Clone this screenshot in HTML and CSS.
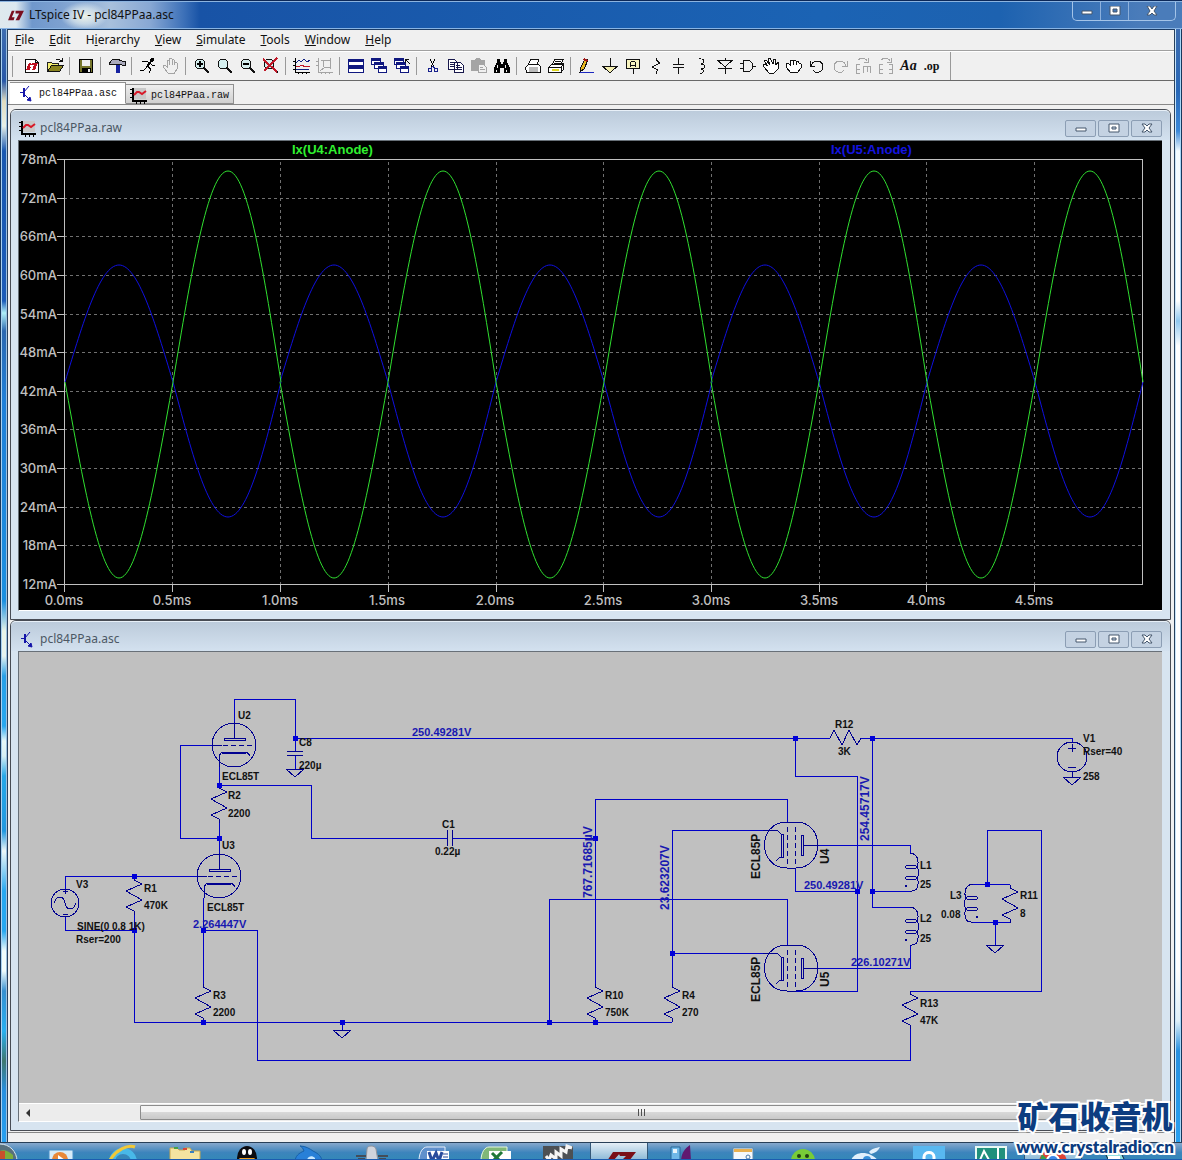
FILE: index.html
```html
<!DOCTYPE html>
<html lang="en">
<head>
<meta charset="utf-8">
<title>LTspice IV - pcl84PPaa.asc</title>
<link rel="stylesheet" href="styles.css">
</head>
<body>
<svg class="defs" aria-hidden="true">
  <defs>
    <g id="ic-raw"><path fill="#c8c8c8" d="M3 1h13v11H3z"/><path fill="none" stroke="#000" stroke-width="2" d="M3 1v13h14"/><path stroke="#000" d="M0 2.500h3M0 6.500h3M0 10.500h3M6.500 14v3M10.500 14v3M14.500 14v3"/><path fill="none" stroke="#d81828" stroke-width="2" d="M4 8l3-3h2l3 2 4-3"/></g>
    <g id="ic-asc" fill="none" stroke="#1414a8"><path stroke-width="2" d="M6 3v9"/><path d="M2 7.500h4M6 7l5-6M6 9l6 6"/><path fill="#1414a8" d="M13 16l-4-1 3-3z"/></g>
    <g id="ic-lt"><path fill="#7a0f20" d="M4 3h3L4 10h3l-1 3H0zM8 3h9l-5 10H8l4-7H8z"/></g>
    <g id="ic-lens"><circle cx="7" cy="7" r="5" fill="#d4eeee" stroke="#111"/><path stroke="#111" stroke-width="2" d="M11 11l5 5"/></g>
    <g id="ic-hand" fill="none" stroke="currentColor"><path d="M6 16l-4-5-1-2 2-1 2 2V4l1-1 1 1v4V2l2-1 1 1v6V3l1-1 1 1v5l1-3 2 1v6l-3 5z"/></g>
    <g id="ic-fist" fill="#fff" stroke="#111"><path d="M5 15l-3-4-1-2V7l2-1 2 2V4l2-1 1 1 2-1 1 1 2 0 1 2 2 1v4l-3 4z"/><path d="M8 4v4M11 4v4"/></g>
  </defs>
</svg>

<main class="app">
  <header class="titlebar">
    <svg class="logo" viewBox="0 0 17 15"><use href="#ic-lt"/></svg>
    <h1>LTspice IV - pcl84PPaa.asc</h1>
    <div class="caption">
      <button aria-label="Minimize"><svg viewBox="0 0 14 10"><path class="cap" d="M2 5h10v3H2z"/></svg></button>
      <button aria-label="Maximize"><svg viewBox="0 0 14 10"><path class="cap" fill-rule="evenodd" d="M2 0h10v9H2zM5 3v3h4V3z"/></svg></button>
      <button class="close" aria-label="Close"><svg viewBox="0 0 14 10"><path class="cap" d="M2 0h3l2 3 2-3h3L9 5l3 4H9L7 7 5 9H2l3-4z"/></svg></button>
    </div>
  </header>

  <div class="client">
    <nav class="menu">
      <button><u>F</u>ile</button><button><u>E</u>dit</button><button>H<u>i</u>erarchy</button><button><u>V</u>iew</button><button><u>S</u>imulate</button><button><u>T</u>ools</button><button><u>W</u>indow</button><button><u>H</u>elp</button>
    </nav>

    <div class="toolbar" role="toolbar">
      <button aria-label="New schematic"><svg viewBox="0 0 18 18"><path fill="#fff" stroke="#111" d="M2.500 2.500h10l3 3v10h-13zM12.500 2.500v3h3"/><path fill="#c01020" d="M6 6h2l-1 4h1l-1 3H3zM9 6h6l-3 7h-3l2-5H8z"/></svg></button>
      <button aria-label="Open"><svg viewBox="0 0 18 18"><path fill="#f4ee70" stroke="#222" d="M1.500 14.500v-9h4l1 1h6v2"/><path fill="#8a8420" stroke="#111" d="M1.500 14.500l4-6h12l-4 6z"/><path fill="none" stroke="#111" d="M10 3l2-1 4 2M16 1v3h-3"/></svg></button>
      <i class="sep"></i>
      <button aria-label="Save"><svg viewBox="0 0 18 18"><path fill="#76762c" stroke="#000" d="M2.500 2.500h13v13h-13z"/><path fill="#eee" d="M5 3h8v6H5z"/><path d="M5 11h9v5H5z"/><path fill="#eee" d="M11 12h2v3h-2z"/></svg></button>
      <i class="sep"></i>
      <button aria-label="Control panel"><svg viewBox="0 0 18 18"><path fill="#aab" stroke="#111" d="M1 7l3-4 5-1 5 2h3v4h-3l-3-1H6L3 8z"/><path fill="#1622a0" d="M8 8h4v8H8z"/></svg></button>
      <i class="sep"></i>
      <button aria-label="Run"><svg viewBox="0 0 18 18"><g fill="none" stroke="#000"><path stroke-width="2" d="M11 5l-3 5"/><path d="M3 5l4-1 4 2 3 3 2-1M8 9l4 3-2 4M8 10l-3 3-4 1"/></g><circle cx="13" cy="3" r="2"/></svg></button>
      <button class="dim" aria-label="Halt"><svg viewBox="0 0 18 18"><use href="#ic-hand"/></svg></button>
      <i class="sep"></i>
      <button aria-label="Zoom in"><svg viewBox="0 0 18 18"><use href="#ic-lens"/><path stroke="#000" stroke-width="2" d="M4 7h6M7 4v6"/></svg></button>
      <button aria-label="Pan"><svg viewBox="0 0 18 18"><use href="#ic-lens"/></svg></button>
      <button aria-label="Zoom out"><svg viewBox="0 0 18 18"><use href="#ic-lens"/><path stroke="#000" stroke-width="2" d="M4 7h6"/></svg></button>
      <button aria-label="Zoom to fit"><svg viewBox="0 0 18 18"><use href="#ic-lens"/><path stroke="#c01828" stroke-width="2" d="M1 2l14 13M15 1L2 14"/></svg></button>
      <i class="sep"></i>
      <button aria-label="Autorange"><svg viewBox="0 0 18 18"><g fill="none"><path stroke="#000" d="M2.500 1v14.500H17M0 4.500h2M0 8.500h2M0 12.500h2M5.500 15v2M9.500 15v2M13.500 15v2"/><path stroke="#102080" d="M3 6l3-3 2 2 3-3 3 3 3-2M3 13l4-1 3 1 6-1"/><path stroke="#c01828" d="M3 9h4l2-1 3 2 5-1"/></g></svg></button>
      <button class="dim" aria-label="Zoom area"><svg viewBox="0 0 18 18"><g fill="none" stroke="currentColor"><path d="M2.500 1v14.500H17M0 4.500h2M0 8.500h2M5 3h4M14.500 1v11M5.500 15v2M9.500 15v2M13.500 15v2M8 11l-4 3"/><circle cx="11" cy="7" r="4"/></g></svg></button>
      <i class="sep"></i>
      <button aria-label="Tile windows"><svg viewBox="0 0 18 18"><path fill="#fff" stroke="#101880" d="M1.500 2.500h15v6h-15zM1.500 9.500h15v6h-15z"/><path fill="#101880" d="M1 2h16v3H1zM1 9h16v3H1z"/></svg></button>
      <button aria-label="Cascade windows"><svg viewBox="0 0 18 18"><g fill="#fff" stroke="#101880"><path d="M1.500 1.500h9v6h-9zM4.500 5.500h9v6h-9zM8.500 9.500h8v6h-8z"/></g><path fill="#101880" d="M1 1h10v3H1zM4 5h10v3H4zM8 9h9v3H8z"/></svg></button>
      <button aria-label="Close windows"><svg viewBox="0 0 18 18"><g fill="#fff" stroke="#101880"><path d="M1.500 1.500h9v6h-9zM3.500 5.500h9v6h-9zM7.500 9.500h8v6h-8z"/></g><path fill="#101880" d="M1 1h10v3H1zM3 5h10v3H3zM7 9h9v3H7z"/><path stroke="#111" fill="none" d="M12.500 6V2.500H16M13 3l4 4"/></svg></button>
      <i class="sep"></i>
      <button aria-label="Cut"><svg viewBox="0 0 18 18"><path stroke="#000" fill="none" d="M6 2l4 8M11 2L7 10"/><g fill="none" stroke="#18208c"><circle cx="6" cy="13" r="2"/><circle cx="12" cy="13" r="2"/><path d="M8 9l3 2M9 9l-2 2"/></g></svg></button>
      <button aria-label="Copy"><svg viewBox="0 0 18 18"><g fill="#fff" stroke="#18184c"><path d="M1.500 2.500h6l3 3v7h-9zM7.500 5.500h6l3 3v7h-9z"/><path d="M3 5.500h4M3 7.500h4M3 9.500h4M9 8.500h4M9 10.500h6M9 12.500h6"/></g></svg></button>
      <button class="dim" aria-label="Paste"><svg viewBox="0 0 18 18"><path fill="currentColor" d="M1 3h4l1-2h4l1 2h4v11H1z"/><path fill="#f0f0f0" stroke="currentColor" d="M8.500 7.500h5l3 3v5h-8zM10 10.500h3M10 12.500h5"/></svg></button>
      <button aria-label="Find"><svg viewBox="0 0 18 18"><path d="M4 2h3v3h1v2h2V5h1V2h3v3l3 6v5h-6v-5H7v5H1v-5l3-6z"/><path fill="#eee" d="M4 8h1v3H4zM12 8h1v3h-1zM3 13h1v2H3zM13 13h1v2h-1z"/></svg></button>
      <i class="sep"></i>
      <button aria-label="Print setup"><svg viewBox="0 0 18 18"><path fill="#fff" stroke="#111" d="M4.500 7.500l2-5h8l-1 5M1.500 10.500l3-3h10l2 2v6h-14z"/><path fill="#bbb" d="M5 10h9v5H5z"/></svg></button>
      <button aria-label="Print"><svg viewBox="0 0 18 18"><path fill="#fff" stroke="#111" d="M5.500 7.500l2-5h9l-3 5M1.500 10.500l3-3h10l2-1v6l-3 3h-12z"/><path stroke="#111" fill="none" d="M8 4.500h6M7 6h6M2 10.500h12v5M14 10l3-3"/><path fill="#e0d820" d="M5 12h7v2H5z"/></svg></button>
      <i class="sep"></i>
      <button aria-label="Wire"><svg viewBox="0 0 18 18"><path stroke="#1c28c0" fill="none" d="M2 15.500h14"/><path fill="#e8b820" stroke="#111" d="M2 15l1-5 4-8 3 1-4 9z"/><path fill="#a01818" d="M6 1l4 2-1 2-4-2z"/></svg></button>
      <button aria-label="Ground"><svg viewBox="0 0 18 18"><path fill="#f4eeb0" stroke="#111" d="M9 1v8M2 9.500h14L9 16z"/></svg></button>
      <button aria-label="Label net"><svg viewBox="0 0 18 18"><path fill="#f8f4c0" stroke="#111" d="M2.500 2.500h13v9h-13z"/><path fill="none" stroke="#111" d="M9 12v5M6.500 10V6l1-1.500h3l1 1.500v4M7 8.500h4"/></svg></button>
      <button aria-label="Resistor"><svg viewBox="0 0 18 18"><path fill="none" stroke="#111" d="M9 1v2l4 3-8 4 6 3-2 2v2"/></svg></button>
      <button aria-label="Capacitor"><svg viewBox="0 0 18 18"><path fill="none" stroke="#111" d="M8.500 1v6M3 7.500h11M3 10.500h11M8.500 11v6"/></svg></button>
      <button aria-label="Inductor"><svg viewBox="0 0 18 18"><path fill="none" stroke="#111" d="M6 2c6-1 6 4 2 5 5 0 5 5 0 5 4 1 2 5-1 4"/></svg></button>
      <button aria-label="Diode"><svg viewBox="0 0 18 18"><path fill="none" stroke="#111" d="M9 1v2M2 3.500h14L9 10zM2 11.500h14M9 10v7"/></svg></button>
      <button aria-label="Component"><svg viewBox="0 0 18 18"><path fill="none" stroke="#111" d="M4.500 3.500h4c7 0 7 11 0 11h-4zM1 6.500h3M1 11.500h3M13 9h4"/></svg></button>
      <button aria-label="Move"><svg viewBox="0 0 18 18"><path fill="#fff" stroke="#111" d="M7 16l-5-6-1-2 2-1 3 2-4-5 1-1 2 1 3 4-2-6 2-1 3 6V2l2 0 1 6 2-3 1 1-1 6-4 4z"/></svg></button>
      <button aria-label="Drag"><svg viewBox="0 0 18 18"><use href="#ic-fist"/></svg></button>
      <button aria-label="Undo"><svg viewBox="0 0 18 18"><path fill="none" stroke="#111" d="M3 9c2-7 12-6 12 1 0 6-8 7-10 3M2 4v5h5"/></svg></button>
      <button class="dim" aria-label="Redo"><svg viewBox="0 0 18 18"><path fill="none" stroke="currentColor" d="M15 9C13 2 3 3 3 10c0 6 8 7 10 3M16 4v5h-5"/></svg></button>
      <button class="dim" aria-label="Rotate"><svg viewBox="0 0 18 18"><path fill="none" stroke="currentColor" d="M4 3c3-3 8-2 9 1M14 1v4h-4M6 7.500H2.500v9H6M3 12h3M9.500 16V9.500h7V16M13 10v5"/></svg></button>
      <button class="dim" aria-label="Mirror"><svg viewBox="0 0 18 18"><path fill="none" stroke="currentColor" d="M4 3c3-3 8-2 9 1M14 1v4h-4M6 7.500H2.500v9H6M3 12h3M12 7.500h3.500v9H12M12 12h3"/></svg></button>
      <button class="aa">Aa</button>
      <button class="op">.op</button>
      <i class="sep end"></i>
    </div>

    <div class="tabs" role="tablist">
      <button class="tab active" role="tab" aria-selected="true"><svg viewBox="0 0 17 17"><use href="#ic-asc"/></svg>pcl84PPaa.asc</button>
      <button class="tab" role="tab" aria-selected="false"><svg viewBox="0 0 17 17"><use href="#ic-raw"/></svg>pcl84PPaa.raw</button>
    </div>

    <section class="child">
      <header class="child-title">
        <svg viewBox="0 0 17 17"><use href="#ic-raw"/></svg>
        <h2>pcl84PPaa.raw</h2>
        <button aria-label="Minimize"><svg viewBox="0 0 14 10"><path class="cap" d="M2 5h10v3H2z"/></svg></button>
        <button aria-label="Maximize"><svg viewBox="0 0 14 10"><path class="cap" fill-rule="evenodd" d="M2 1h10v8H2zM5 4v2h4V4z"/></svg></button>
        <button aria-label="Close"><svg viewBox="0 0 14 10"><path class="cap" d="M2 1h3l2 2 2-2h3L9 5l3 4H9L7 7 5 9H2l3-4z"/></svg></button>
      </header>
      <div class="view">
        <svg class="plot" viewBox="19 141 1143 469" role="img" aria-label="Anode current waveforms">
          <g class="grid">
            <path d="M64 198H1142M64 236H1142M64 275H1142M64 314H1142M64 352H1142M64 391H1142M64 429H1142M64 468H1142M64 507H1142M64 545H1142"/>
            <path d="M172 162V584M280 162V584M388 162V584M496 162V584M603 162V584M711 162V584M819 162V584M926 162V584M1034 162V584"/>
          </g>
          <path class="axis" d="M57 159H1142V584H57M64 159V592M57 198h7M57 236h7M57 275h7M57 314h7M57 352h7M57 391h7M57 429h7M57 468h7M57 507h7M57 545h7M172 584v8M280 584v8M388 584v8M496 584v8M603 584v8M711 584v8M819 584v8M926 584v8M1034 584v8"/>
          <defs>
            <path id="u5" d="M0 0C18-60 35-117 54-117S90-60 108 0C126 68 143 135 163 135S199 68 216 0"/>
            <path id="u4" d="M0 0C18 100 35 196 54 196S90 100 108 0C126-108 143-211 163-211S199-108 216 0"/>
          </defs>
          <g class="trace u5"><use href="#u5" x="65" y="382"/><use href="#u5" x="280" y="382"/><use href="#u5" x="496" y="382"/><use href="#u5" x="711" y="382"/><use href="#u5" x="927" y="382"/></g>
          <g class="trace u4"><use href="#u4" x="65" y="382"/><use href="#u4" x="280" y="382"/><use href="#u4" x="496" y="382"/><use href="#u4" x="711" y="382"/><use href="#u4" x="927" y="382"/></g>
          <g class="names"><text class="n4" x="292" y="154">Ix(U4:Anode)</text><text class="n5" x="831" y="154">Ix(U5:Anode)</text></g>
          <g class="ticks">
            <text x="57" y="164">78mA</text><text x="57" y="203">72mA</text><text x="57" y="241">66mA</text><text x="57" y="280">60mA</text><text x="57" y="319">54mA</text><text x="57" y="357">48mA</text><text x="57" y="396">42mA</text><text x="57" y="434">36mA</text><text x="57" y="473">30mA</text><text x="57" y="512">24mA</text><text x="57" y="550">18mA</text><text x="57" y="589">12mA</text>
          </g>
          <g class="ticks time">
            <text x="64" y="605">0.0ms</text><text x="172" y="605">0.5ms</text><text x="280" y="605">1.0ms</text><text x="387" y="605">1.5ms</text><text x="495" y="605">2.0ms</text><text x="603" y="605">2.5ms</text><text x="711" y="605">3.0ms</text><text x="819" y="605">3.5ms</text><text x="926" y="605">4.0ms</text><text x="1034" y="605">4.5ms</text>
          </g>
        </svg>
      </div>
    </section>

    <section class="child">
      <header class="child-title">
        <svg viewBox="0 0 17 17"><use href="#ic-asc"/></svg>
        <h2>pcl84PPaa.asc</h2>
        <button aria-label="Minimize"><svg viewBox="0 0 14 10"><path class="cap" d="M2 5h10v3H2z"/></svg></button>
        <button aria-label="Maximize"><svg viewBox="0 0 14 10"><path class="cap" fill-rule="evenodd" d="M2 1h10v8H2zM5 4v2h4V4z"/></svg></button>
        <button aria-label="Close"><svg viewBox="0 0 14 10"><path class="cap" d="M2 1h3l2 2 2-2h3L9 5l3 4H9L7 7 5 9H2l3-4z"/></svg></button>
      </header>
      <div class="view">
        <svg class="schematic" viewBox="19 652 1143 451" role="img" aria-label="Push-pull amplifier schematic">
          <defs>
            <path id="res" d="M0-3V0L8 4-8 11 8 20-8 27 0 31v4"/>
            <path id="gnd" d="M-9 0H9L0 8Z"/>
            <g id="triode"><circle r="22"/><path d="M0-23V-7M-10-7H11V-5H-10ZM-22 0h10M-15 11l3-4H13l3 4M-12 8H12M-15 11V22"/><path stroke-dasharray="5 3" d="M-11 0H19"/></g>
            <g id="pentode"><path d="M-5-23H4C33-23 33 23 4 23H-5C-35 23-35-23-5-23ZM-29-15h14l4 4V12M-9-11V12h-3l-4 4M-11-11h2M9-10h2V10H9ZM11 0H27"/><path stroke-dasharray="5 3" d="M-5-18V20M3-18V20"/></g>
            <g id="coil"><path d="M0 0C9 1 9 10 7 14 9 17 9 22 7 25 9 29 9 38 2 38H0"/><ellipse cx="1" cy="14" rx="6" ry="2"/><ellipse cx="1" cy="25" rx="6" ry="2"/><circle cx="-4" cy="33" r="1"/></g>
          </defs>
          <path class="wire" d="M234 722V699H295V738M295 738H830M861 738H1072V742M212 745H180V838H219M219 766V785M219 819V853M219 785H311V838H447M452 838H595M65 889V876H197M65 917V930H134M134 911V1022H672M203 898V987M203 930H257V1060H910V1026M787 822V799H595V987M787 945V899H549V1022M763 830H672V987M672 953H763M795 738V776H857V991H795M857 891H795V868M872 738V907H910M872 891H910M819 845H910V853M819 968H910V945M987 884V830H1041V991H910M972 884H1010M972 922H1010M995 922V945M342 1022V1030M295 738V751M295 756V769"/>
          <g class="part">
            <use href="#triode" x="234" y="745"/><use href="#triode" x="219" y="876"/>
            <use href="#pentode" x="792" y="845"/><use href="#pentode" x="792" y="968"/>
            <use href="#res" x="219" y="788"/><use href="#res" x="134" y="880"/><use href="#res" x="203" y="987"/><use href="#res" x="595" y="987"/><use href="#res" x="672" y="987"/><use href="#res" x="910" y="994"/><use href="#res" x="1010" y="888"/>
            <path d="M830 738l4-8 8 15 7-15 8 15 4-7M287 751h16M287 755h16M447 830v16M452 830v16"/>
            <use href="#coil" x="910" y="853"/><use href="#coil" x="910" y="907"/><use href="#coil" transform="translate(973 884) scale(-1 1)"/>
            <circle cx="1072" cy="757" r="15"/><path d="M1068 748h8M1072 744v8M1068 767h8M1072 772v5"/>
            <circle cx="65" cy="903" r="14"/><path d="M63 891h5M65 889v5M63 914h5M54 903c3-8 9-8 11 0s8 8 11 0"/>
            <use href="#gnd" x="295" y="769"/><use href="#gnd" x="342" y="1030"/><use href="#gnd" x="1072" y="777"/><use href="#gnd" x="995" y="945"/>
          </g>
          <path class="nodes" d="M295 738h0M219 785h0M219 838h0M134 876h0M134 930h0M203 930h0M203 1022h0M342 1022h0M549 1022h0M595 1022h0M595 838h0M672 953h0M795 738h0M872 738h0M857 891h0M872 891h0M987 884h0M995 922h0"/>
          <g class="label">
            <text x="238" y="719">U2</text><text x="222" y="780">ECL85T</text><text x="299" y="746">C8</text><text x="299" y="769">220µ</text><text x="228" y="799">R2</text><text x="228" y="817">2200</text><text x="222" y="849">U3</text><text x="207" y="911">ECL85T</text><text x="76" y="888">V3</text><text x="144" y="892">R1</text><text x="144" y="909">470K</text><text x="77" y="930">SINE(0 0.8 1K)</text><text x="76" y="943">Rser=200</text><text x="213" y="999">R3</text><text x="213" y="1016">2200</text><text x="442" y="828">C1</text><text x="435" y="855">0.22µ</text><text x="605" y="999">R10</text><text x="605" y="1016">750K</text><text x="682" y="999">R4</text><text x="682" y="1016">270</text><text x="835" y="728">R12</text><text x="838" y="755">3K</text><text x="1083" y="742">V1</text><text x="1083" y="755">Rser=40</text><text x="1083" y="780">258</text><text x="920" y="869">L1</text><text x="920" y="888">25</text><text x="920" y="922">L2</text><text x="920" y="942">25</text><text x="950" y="899">L3</text><text x="941" y="918">0.08</text><text x="1020" y="899">R11</text><text x="1020" y="917">8</text><text x="920" y="1007">R13</text><text x="920" y="1024">47K</text>
          </g>
          <g class="volt"><text x="193" y="928">2.264447V</text><text x="412" y="736">250.49281V</text><text x="804" y="889">250.49281V</text><text x="851" y="966">226.10271V</text></g>
          <g class="volt up"><text transform="translate(592 898) rotate(-90)">767.71685µV</text><text transform="translate(669 910) rotate(-90)">23.623207V</text><text transform="translate(869 841) rotate(-90)">254.45717V</text></g>
          <g class="label up"><text transform="translate(760 879) rotate(-90)">ECL85P</text><text transform="translate(829 864) rotate(-90)">U4</text><text transform="translate(760 1002) rotate(-90)">ECL85P</text><text transform="translate(829 987) rotate(-90)">U5</text></g>
        </svg>
        <div class="hscroll">
          <button aria-label="Scroll left"><svg viewBox="0 0 8 8"><path fill="#333" d="M6 0v8L2 4z"/></svg></button>
          <div class="track"><div class="thumb"><i></i><i></i><i></i></div></div>
          <button aria-label="Scroll right"><svg viewBox="0 0 8 8"><path fill="#333" d="M2 0v8l4-4z"/></svg></button>
        </div>
      </div>
    </section>
    <div class="status"></div>
  </div>
</main>

<footer class="taskbar">
  <div class="orb"><svg viewBox="0 0 18 17"><circle cx="0" cy="18" r="17" fill="#58707c" stroke="#dce8f0"/><path fill="#7cae3c" d="M0 8c4-2 8 0 13 4v5H0z"/><path fill="#c8502c" d="M0 8h5v9H0z"/></svg></div>
  <div class="task"><svg viewBox="0 0 40 17"><path fill="#d8ecf8" stroke="#4890c8" d="M8 7h24v12H8z"/><circle cx="19" cy="17" r="8" fill="#e88838"/><path fill="#fff" d="M17 12l7 5h-7z"/></svg></div>
  <div class="task"><svg viewBox="0 0 40 17"><circle cx="20" cy="19" r="11" fill="none" stroke="#48b8e8" stroke-width="6"/><path fill="none" stroke="#f0c838" stroke-width="3" d="M7 17C13 7 25 1 32 4"/></svg></div>
  <div class="task"><svg viewBox="0 0 40 17"><path fill="#f4e4a0" stroke="#c8a850" d="M5 19V5h7l2 2h6V5h5l2 3h8v11z"/><path fill="#48a048" d="M9 4h4v2H9z"/><path fill="#d84838" d="M18 5h4v2h-4z"/><path fill="#3880c0" d="M25 8h4v2h-4z"/></svg></div>
  <div class="task"><svg viewBox="0 0 40 17"><ellipse cx="20" cy="15" rx="10" ry="12" fill="#0c0c10"/><ellipse cx="17" cy="9" rx="2" ry="3" fill="#fff"/><ellipse cx="23" cy="9" rx="2" ry="3" fill="#fff"/><path fill="#f0a020" d="M12 15h16l-3 4H15z"/></svg></div>
  <div class="task"><svg viewBox="0 0 40 17"><path fill="#2880d8" stroke="#1860a8" d="M6 19c0-6 4-9 9-11-1-3-3-5-4-5 6 0 10 3 13 5 6 3 9 6 9 11z"/><path fill="#c8e8ff" d="M18 17c1-4 5-5 8-2v3z"/></svg></div>
  <div class="task"><svg viewBox="0 0 40 17"><path fill="#d0d4dc" stroke="#90949c" d="M16 6c0-4 8-4 9 0l2 12H15z"/><path fill="none" stroke="#444c58" stroke-width="2" d="M5 13h10M27 13h10M7 16h7M28 16h7"/></svg></div>
  <div class="task"><svg viewBox="0 0 40 17"><path fill="#6090cc" stroke="#e8f0fc" d="M6 18c0-9 4-14 8-14h18v14z"/><path fill="#fff" d="M14 8h22v10H14z"/><path fill="none" stroke="#284c9c" stroke-width="3" d="M16 9l3 9 4-8 3 8 3-9"/><path stroke="#284c9c" d="M30 11h5M30 14h5"/></svg></div>
  <div class="task"><svg viewBox="0 0 40 17"><path fill="#80b878" stroke="#e8f8e0" d="M6 18c0-9 4-14 8-14h18v14z"/><path fill="#fff" d="M14 8h22v10H14z"/><path stroke="#207838" stroke-width="3" d="M17 10l9 9M27 9l-9 9"/></svg></div>
  <div class="task"><svg viewBox="0 0 40 17"><path fill="#4c5054" d="M6 3h30v15H6z"/><path fill="none" stroke="#f4f4f4" stroke-width="3" d="M9 13l3 4 2-5 5 4v-7l5 4V6l5 3 1-6 5 2"/></svg></div>
  <div class="task on"><svg viewBox="0 0 40 17"><path fill="#7a0f18" d="M14 9h8l-8 9H8zM19 9h18l-7 9h-8l5-5h-6z"/></svg></div>
  <div class="task"><svg viewBox="0 0 40 17"><path fill="#70b8e8" stroke="#286898" d="M10 4h9v14h-9z"/><path fill="#601870" d="M20 18c0-7 4-13 9-16l1 16z"/><path fill="#e8f4fc" d="M12 6h4v4h-4z"/></svg></div>
  <div class="task"><svg viewBox="0 0 40 17"><path fill="#f4f8fc" stroke="#6088a8" d="M10 5h20v13H10z"/><path fill="#e8b050" d="M11 6h18v3H11z"/><circle cx="25" cy="14" r="2" fill="none" stroke="#4878a8"/></svg></div>
  <div class="task"><svg viewBox="0 0 40 17"><circle cx="18" cy="18" r="12" fill="#78cc38"/><circle cx="14" cy="13" r="2" fill="#204010"/><circle cx="22" cy="13" r="2" fill="#204010"/></svg></div>
  <div class="task"><svg viewBox="0 0 40 17"><path fill="#e0f0fc" d="M4 18c2-8 12-10 20-6 4 2 6 4 7 6zM22 9c3-4 7-4 11-5-2 4-5 6-9 7z"/><circle cx="20" cy="17" r="4" fill="#3890d8"/></svg></div>
  <div class="task"><svg viewBox="0 0 40 17"><path fill="#58b8f0" d="M4 3h32v15H4z"/><path fill="none" stroke="#fff" stroke-width="3" d="M15 18v-4c0-6 10-6 10 0v4"/></svg></div>
  <div class="task"><svg viewBox="0 0 40 17"><path fill="#20907c" stroke="#e8f8f4" stroke-width="2" d="M5 4h30v15H5z"/><path fill="none" stroke="#fff" stroke-width="2" d="M9 17l4-9 5 9M27 5v13"/></svg></div>
  <div class="task on"><svg viewBox="0 0 40 17"><circle cx="20" cy="20" r="14" fill="#e04434"/><path fill="#f4c430" d="M20 20l14-4v6z"/><path fill="#38a050" d="M6 20l3-9 9 9z"/><circle cx="20" cy="18" r="6" fill="#4088e8" stroke="#fff" stroke-width="2"/></svg></div>
  <div class="task"><svg viewBox="0 0 40 17"><path fill="#90e0e0" stroke="#102030" d="M9 8l15-2 6 12H14z"/><path fill="#fff" d="M13 13h12v4H13z"/></svg></div>
</footer>
<div class="watermark"><strong>矿石收音机</strong><span>www.crystalradio.cn</span></div>
</body>
</html>
```
FILE: styles.css
```css
* { box-sizing: border-box; }
body {
  margin: 0;
  position: relative;
  overflow-x: hidden;
  background: #1c5cb0;
  font-family: "Noto Sans", "Open Sans", sans-serif;
  color: #111;
}
button {
  margin: 0;
  padding: 0;
  border: 0;
  background: none;
  font: inherit;
  color: inherit;
}
svg { display: block; }
h1, h2 { margin: 0; font-weight: 400; }
.defs { display: none; }

/* glass frame of the main window */
.app {
  padding: 0 8px;
  border-top: 1px solid #0c2858;
  background:
    linear-gradient(90deg, #18385c 0 1px, #a8d0f0 1px 2px, transparent 2px 6px, #9cc0e0 6px 7px, #28405c 7px 8px) left / 8px 100% no-repeat,
    linear-gradient(90deg, #28405c 0 1px, #c8e4f8 1px 2px, transparent 2px 6px, #a8d8f8 6px 7px, #18385c 7px 8px) right / 8px 100% no-repeat,
    linear-gradient(#3c6cb0 0 30px, #2858a8 80px, #e0dcc0 100px, #e8f0e8 125px, #1858b0 150px, #1c5cb8 300px, #b0f0f8 312px, #2c68b0 330px, #2080d8 400px, #1c90e0 600px, #e8f4e8 630px, #e8f4f0 655px, #28a0e8 675px, #28a8f0 725px, #e8f8f8 740px, #d8f0f4 755px, #28a8e8 775px, #2098e0 830px, #f0f8f8 850px, #28a8f0 890px, #28a8f0 930px, #f0fcfc 950px, #f0fcfc 970px, #3890d0 990px, #28b0f0 1030px, #407870 1060px, #2890e0 1090px, #28a0f0) left / 8px 100% no-repeat,
    linear-gradient(#3c6cb0 0 30px, #2868b8 90px, #3c88d8 130px, #f4fcff 150px, #fff 300px, #90c8f0 320px, #fff 345px, #fff 970px, #e0f0f8 1020px, #2890e0 1050px, #28a0f0) right / 8px 100% no-repeat,
    #1b5fb4;
}
.titlebar {
  display: flex;
  align-items: center;
  height: 28px;
  margin: 0 -8px;
  padding-left: 8px;
  border-top: 1px solid #8cb4e0;
  border-bottom: 1px solid #88b4e4;
  background:
    radial-gradient(ellipse at center, #f0f4e8 0, #e4eef0a0 40%, transparent 70%) 60px 0 / 48px 28px no-repeat,
    linear-gradient(90deg, #dfe9ee 0, #dce8f0 16px, #7098cc 32px, #7ca0d0 60px, #a8c0dc 110px, #88a8d4 150px, #3c70b8 184px, #1853a6 200px, #1b63b4 820px, #1d62b0 1000px, #4a7cba 1140px);
}
.logo { width: 16px; height: 14px; }
.titlebar h1 {
  margin-left: 5px;
  flex: 1;
  font-size: 12px;
  line-height: 16px;
}
.caption {
  display: flex;
  align-self: flex-start;
  height: 19px;
  margin-right: 6px;
  border: 1px solid #a4c4e8;
  border-top: 0;
  border-radius: 0 0 5px 5px;
}
.caption button {
  display: grid;
  place-items: center;
  width: 28px;
  border-right: 1px solid #8cb0dc;
}
.caption .close { width: 46px; border-right: 0; }
.caption svg, .child-title button svg { width: 14px; height: 10px; }
.cap { fill: #fff; stroke: #44566c; }

.client { background: #f0f0f0; }

.menu {
  display: flex;
  gap: 15px;
  height: 22px;
  padding-left: 7px;
  border-top: 1px solid #1c3c64;
  border-bottom: 1px solid #a0a0a0;
  font-size: 12px;
  line-height: 20px;
}

.toolbar {
  display: flex;
  align-items: center;
  height: 30px;
  padding-left: 12px;
  border-top: 1px solid #fff;
  border-bottom: 1px solid #696969;
  background: linear-gradient(#999, #999) 4px 4px / 1px 21px no-repeat;
}
.toolbar button { display: grid; place-items: center; width: 23px; height: 24px; }
.toolbar svg { width: 18px; height: 18px; shape-rendering: crispEdges; }
.toolbar .dim { color: #a4a4a4; }
.sep { width: 8px; height: 18px; background: linear-gradient(#999, #999) 3px 0 / 1px 100% no-repeat; }
.sep.end { height: 28px; background-position: 7px 0; }
.toolbar .aa { font: italic bold 14px "Liberation Serif", serif; }
.toolbar .op { font: bold 12px "Liberation Serif", serif; }

.tabs {
  display: flex;
  align-items: flex-start;
  height: 24px;
  padding: 1px 0 0 2px;
  border-bottom: 1px solid #888;
}
.tab {
  display: flex;
  align-items: center;
  gap: 4px;
  height: 20px;
  margin-top: 2px;
  padding: 2px 4px 0 4px;
  border: 1px solid #909090;
  border-left: 0;
  background: linear-gradient(#eee, #d0d0d0);
  font: 10px "Liberation Mono", monospace;
}
.tab.active {
  height: 22px;
  margin-top: 0;
  padding: 0 8px 0 8px;
  background: #fff;
  border-color: #909090;
  border-bottom-color: #fff;
}
.tab svg { width: 17px; height: 17px; }

/* document windows */
.child {
  margin: 4px 3px 0 2px;
  padding: 0 8px 8px 7px;
  border: 1px solid #484c54;
  border-radius: 6px 6px 0 0;
  background: #d7e4f0;
}
.child + .child { margin-top: 0; }
.child-title {
  display: flex;
  align-items: center;
  gap: 4px;
  height: 30px;
  margin: 0 -8px 0 -7px;
  padding: 5px 8px 0;
  border-radius: 5px 5px 0 0;
  border-top: 1px solid #e8f0f8;
  background: linear-gradient(#bccbdb, #d3e1ef);
}
.child-title > svg { width: 17px; height: 17px; }
.child-title h2 { flex: 1; font-size: 12px; line-height: 16px; color: #4c5864; }
.child-title button {
  display: grid;
  place-items: center;
  width: 31px;
  height: 17px;
  margin-left: -2px;
  border: 1px solid #8c9eb4;
  border-radius: 2px;
  background: #c4d2e2;
}
.view { border: solid #687078; border-width: 1px 0 0 1px; border-bottom: 1px solid #fff; }
.view > svg { width: 100%; height: auto; }

.plot { background: #000; }
.plot .grid, .plot .axis { fill: none; shape-rendering: crispEdges; }
.grid { stroke: #707070; stroke-dasharray: 3 3; }
.axis { stroke: #c0c0c0; }
.trace { fill: none; }
.trace.u4 { stroke: #30e030; }
.trace.u5 { stroke: #1010e0; }
.names { font: bold 13px "Liberation Sans", sans-serif; }
.n4 { fill: #30f030; }
.n5 { fill: #1414e0; }
.ticks { font: 500 13px Inter, sans-serif; fill: #c0c0c0; text-anchor: end; }
.ticks.time { text-anchor: middle; }

.schematic { background: #c0c0c0; }
.wire, .part, .nodes { fill: none; shape-rendering: crispEdges; }
.wire { stroke: #0000c8; }
.part { stroke: #000090; }
.nodes { stroke: #0000d8; stroke-width: 5; stroke-linecap: square; }
.label, .volt { font: bold 10px "Liberation Sans", sans-serif; fill: #111; }
.volt { fill: #1818b0; font-size: 11px; }
.label.up, .volt.up { font-size: 12px; }

.hscroll {
  display: flex;
  height: 18px;
  padding: 1px 0;
  background: #ececec;
  border-top: 1px solid #fff;
}
.hscroll button { display: grid; place-items: center; width: 18px; }
.hscroll svg { width: 8px; height: 8px; }
.track { flex: 1; display: flex; padding-left: 9%; }
.thumb {
  flex: 1;
  display: flex;
  justify-content: center;
  align-items: center;
  gap: 2px;
  border: 1px solid #8c8c8c;
  border-radius: 1px;
  background: linear-gradient(#f4f4f4 0 45%, #d8d8d8 50%, #c8c8c8);
}
.thumb i { width: 1px; height: 7px; background: #505050; }
.status { height: 10px; margin-top: 1px; border-top: 1px solid #888; }

.taskbar {
  display: flex;
  height: 17px;
  overflow: hidden;
  border-top: 1px solid #284058;
  background: linear-gradient(#86a8cc, #3c84bc 60%, #3488b8);
}
.orb { width: 32px; flex: none; }
.orb svg { width: 18px; height: 17px; }
.task { flex: none; display: flex; justify-content: center; width: 58px; margin-right: 4px; }
.task svg { width: 40px; height: 17px; }
.task.on { border: solid #345878; border-width: 0 1px; background: linear-gradient(#e4eef6, #90bcd8); }

.watermark {
  position: absolute;
  right: 8px;
  bottom: 0;
  display: flex;
  flex-direction: column;
  align-items: center;
  color: #0c3c80;
  white-space: nowrap;
  -webkit-text-stroke: 4px #fff;
  paint-order: stroke fill;
}
.watermark strong { font: 900 31px/40px "Noto Sans CJK SC", sans-serif; }
.watermark span { font: 800 17px/24px Lato, sans-serif; }
```
